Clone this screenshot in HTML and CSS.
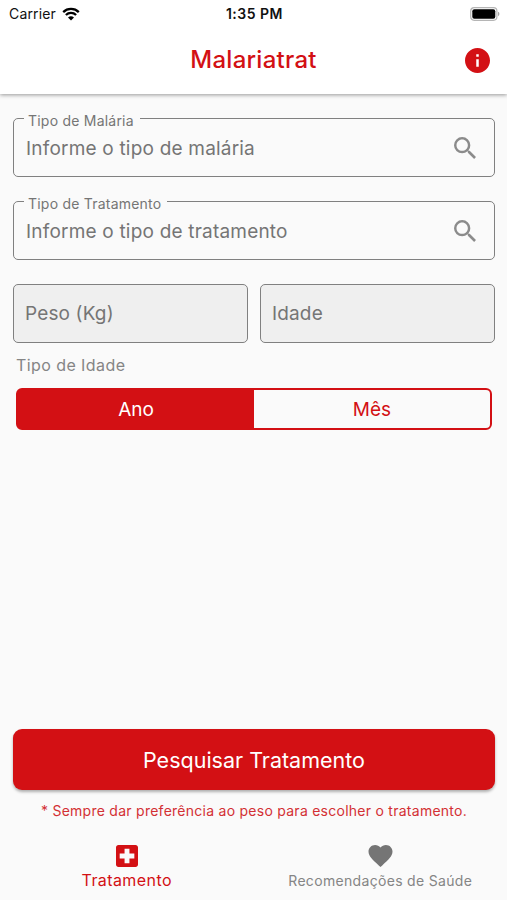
FILE: index.html
```html
<!DOCTYPE html>
<html lang="pt-BR">
<head>
  <meta charset="UTF-8">
  <meta name="viewport" content="width=device-width, initial-scale=1.0">
  <title>Malariatrat</title>
  <link rel="stylesheet" href="styles.css">
</head>
<body>
  <header class="top">
    <div class="status-bar">
      <div class="carrier">
        <span>Carrier</span>
        <svg class="wifi" viewBox="0 0 18 14">
          <path d="M1.2 5.1a11.2 11.2 0 0 1 15.6 0" />
          <path d="M3.9 8a7.3 7.3 0 0 1 10.2 0" />
          <path class="wifi-dot" d="M9 13.6L6 10.6a4.3 4.3 0 0 1 6 0z" />
        </svg>
      </div>
      <span class="time">1:35 PM</span>
      <svg class="battery" viewBox="0 0 30 14">
        <rect x="0.7" y="0.7" width="26.2" height="12.6" rx="3.5" fill="#fff" stroke="#b5b5b5" stroke-width="1.2" />
        <rect x="2.3" y="2.2" width="23" height="9.6" rx="2" fill="#000" />
        <path d="M28 4.8a2.4 2.4 0 0 1 0 4.4z" fill="#a5a5a5" />
      </svg>
    </div>
    <div class="app-bar">
      <h1 class="title">Malariatrat</h1>
      <svg class="info" viewBox="2 2 20 20">
        <path d="M12 2C6.48 2 2 6.48 2 12s4.48 10 10 10 10-4.48 10-10S17.52 2 12 2zm1 15h-2v-6h2v6zm0-8h-2V7h2v2z" />
      </svg>
    </div>
  </header>

  <main class="form">
    <fieldset class="field">
      <legend>Tipo de Malária</legend>
      <div class="field-row">
        <span>Informe o tipo de malária</span>
        <svg class="search" viewBox="3 3 17.5 17.5">
          <path d="M15.5 14h-.79l-.28-.27A6.47 6.47 0 0 0 16 9.5 6.5 6.5 0 1 0 9.5 16c1.61 0 3.09-.59 4.23-1.57l.27.28v.79l5 4.99L20.49 19l-4.99-5zm-6 0C7.01 14 5 11.99 5 9.5S7.01 5 9.5 5 14 7.01 14 9.5 11.99 14 9.5 14z" />
        </svg>
      </div>
    </fieldset>

    <fieldset class="field">
      <legend>Tipo de Tratamento</legend>
      <div class="field-row">
        <span>Informe o tipo de tratamento</span>
        <svg class="search" viewBox="3 3 17.5 17.5">
          <path d="M15.5 14h-.79l-.28-.27A6.47 6.47 0 0 0 16 9.5 6.5 6.5 0 1 0 9.5 16c1.61 0 3.09-.59 4.23-1.57l.27.28v.79l5 4.99L20.49 19l-4.99-5zm-6 0C7.01 14 5 11.99 5 9.5S7.01 5 9.5 5 14 7.01 14 9.5 11.99 14 9.5 14z" />
        </svg>
      </div>
    </fieldset>

    <div class="inputs">
      <div class="input"><span>Peso (Kg)</span></div>
      <div class="input"><span>Idade</span></div>
    </div>

    <div class="age-label"><span>Tipo de Idade</span></div>
    <div class="toggle">
      <div class="option selected"><span>Ano</span></div>
      <div class="option"><span>Mês</span></div>
    </div>

    <div class="submit"><span>Pesquisar Tratamento</span></div>
    <p class="note">* Sempre dar preferência ao peso para escolher o tratamento.</p>
  </main>

  <nav class="tabs">
    <div class="tab active">
      <svg class="cross" viewBox="3 3 18 18">
        <path d="M19 3H5c-1.1 0-2 .9-2 2v14c0 1.1.9 2 2 2h14c1.1 0 2-.9 2-2V5c0-1.1-.9-2-2-2zm-1 11h-4v4h-4v-4H6v-4h4V6h4v4h4v4z" />
      </svg>
      <span>Tratamento</span>
    </div>
    <div class="tab">
      <svg class="heart" viewBox="2 3 20 18.35">
        <path d="M12 21.35l-1.45-1.32C5.4 15.36 2 12.28 2 8.5 2 5.42 4.42 3 7.5 3c1.74 0 3.41.81 4.5 2.09C13.09 3.81 14.76 3 16.5 3 19.58 3 22 5.42 22 8.5c0 3.78-3.4 6.86-8.55 11.54L12 21.35z" />
      </svg>
      <span>Recomendações de Saúde</span>
    </div>
  </nav>
</body>
</html>
```

FILE: styles.css
```css
* {
  margin: 0;
  padding: 0;
  box-sizing: border-box;
}
body {
  height: 100vh;
  display: flex;
  flex-direction: column;
  font-family: Inter, "Liberation Sans", sans-serif;
  background-color: #fafafa;
  color: #757575;
}
svg {
  display: block;
  fill: currentColor;
}
.top {
  height: 94px;
  background-color: #fff;
  box-shadow: 0 1px 4px rgba(0, 0, 0, 0.4);
}
.status-bar {
  height: 27px;
  padding: 0 7px 0 9px;
  display: grid;
  grid-template-columns: 1fr auto 1fr;
  align-items: center;
  color: #111;
  font-size: 14px;
}
.carrier {
  display: flex;
  align-items: center;
  gap: 6px;
  letter-spacing: 0.15px;
}
.wifi {
  width: 18px;
  height: 14px;
  fill: none;
  stroke: #000;
  stroke-width: 2.3;
}
.wifi .wifi-dot {
  fill: #000;
  stroke: none;
}
.time {
  font-weight: 600;
  letter-spacing: 0.5px;
}
.battery {
  width: 30px;
  height: 14px;
  justify-self: end;
}
.app-bar {
  height: 66px;
  padding: 0 17px;
  display: grid;
  grid-template-columns: 1fr auto 1fr;
  align-items: center;
  color: #d31014;
}
.title {
  grid-column: 2;
  padding-bottom: 2px;
  font-size: 24px;
  font-weight: 500;
  letter-spacing: 0.25px;
}
.info {
  width: 25px;
  height: 25px;
  justify-self: end;
}
.form {
  flex: 1;
  padding: 14px 12px 0 13px;
  display: flex;
  flex-direction: column;
}
.field {
  height: 69px;
  margin-bottom: 14px;
  padding: 0 18px 0 12px;
  border: 1px solid #808080;
  border-radius: 5px;
}
/* top padding drops the label a bit below the border line */
.field legend {
  margin-left: -2px;
  padding: 5px 6px 0 4px;
  font-size: 14px;
  line-height: 16px;
  letter-spacing: 0.22px;
}
.field-row {
  height: 38px;
  display: flex;
  align-items: center;
  justify-content: space-between;
  font-size: 19px;
  letter-spacing: 0.2px;
}
.search {
  width: 22px;
  height: 22px;
  color: #8b8b8b;
}
.inputs {
  margin-top: 10px;
  display: grid;
  grid-template-columns: 1fr 1fr;
  gap: 12px;
}
.input {
  height: 59px;
  padding-left: 11px;
  display: flex;
  align-items: center;
  border: 1px solid #808080;
  border-radius: 5px;
  background-color: #efefef;
  font-size: 19px;
  letter-spacing: 0.15px;
}
.age-label {
  margin: 12px 0 13px 3px;
  font-size: 16px;
  line-height: 20px;
  letter-spacing: 0.42px;
  color: #858585;
}
.toggle {
  height: 42px;
  margin: 0 3px;
  display: flex;
  border: 2px solid #d31014;
  border-radius: 6px;
}
.option {
  flex: 1;
  display: flex;
  align-items: center;
  justify-content: center;
  color: #d31014;
  font-size: 19px;
}
.selected {
  background-color: #d31014;
  color: #fff;
}
.submit {
  height: 61px;
  margin-top: auto;
  display: flex;
  align-items: center;
  justify-content: center;
  border-radius: 9px;
  background-color: #d31014;
  box-shadow: 0 2px 3px rgba(0, 0, 0, 0.3);
  color: #fff;
  font-size: 21.5px;
}
.note {
  margin-top: 11px;
  text-align: center;
  font-size: 14px;
  line-height: 20px;
  letter-spacing: 0.26px;
  color: #d33034;
}
.tabs {
  height: 79px;
  display: flex;
}
.tab {
  flex: 1;
  padding-top: 24px;
  display: flex;
  flex-direction: column;
  align-items: center;
  font-size: 14px;
  line-height: 20px;
  letter-spacing: 0.32px;
  color: #858585;
}
.active {
  color: #d31014;
  font-size: 16px;
  letter-spacing: 0.42px;
}
.cross {
  width: 22px;
  height: 22px;
  margin-bottom: 3px;
}
.heart {
  width: 25px;
  height: 22px;
  margin-bottom: 4px;
  color: #757575;
}
```
